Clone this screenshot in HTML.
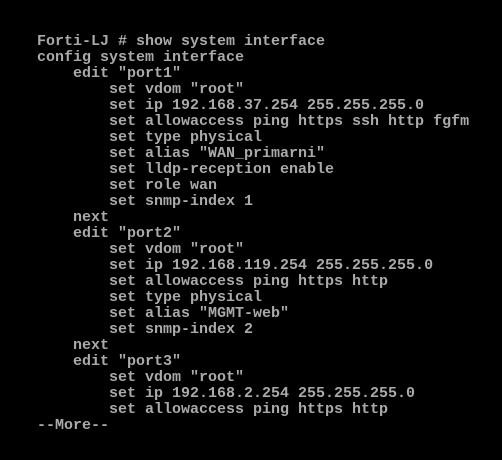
<!DOCTYPE html>
<html><head><meta charset="utf-8"><style>
html,body{margin:0;padding:0;background:#000;width:502px;height:460px;overflow:hidden}
pre{margin:0;position:absolute;left:37px;top:34px;font-family:"Liberation Mono",monospace;font-size:15px;line-height:16px;color:#aaa;font-weight:bold;letter-spacing:0}
</style></head><body><pre>Forti-LJ # show system interface
config system interface
    edit "port1"
        set vdom "root"
        set ip 192.168.37.254 255.255.255.0
        set allowaccess ping https ssh http fgfm
        set type physical
        set alias "WAN_primarni"
        set lldp-reception enable
        set role wan
        set snmp-index 1
    next
    edit "port2"
        set vdom "root"
        set ip 192.168.119.254 255.255.255.0
        set allowaccess ping https http
        set type physical
        set alias "MGMT-web"
        set snmp-index 2
    next
    edit "port3"
        set vdom "root"
        set ip 192.168.2.254 255.255.255.0
        set allowaccess ping https http
--More--</pre></body></html>
